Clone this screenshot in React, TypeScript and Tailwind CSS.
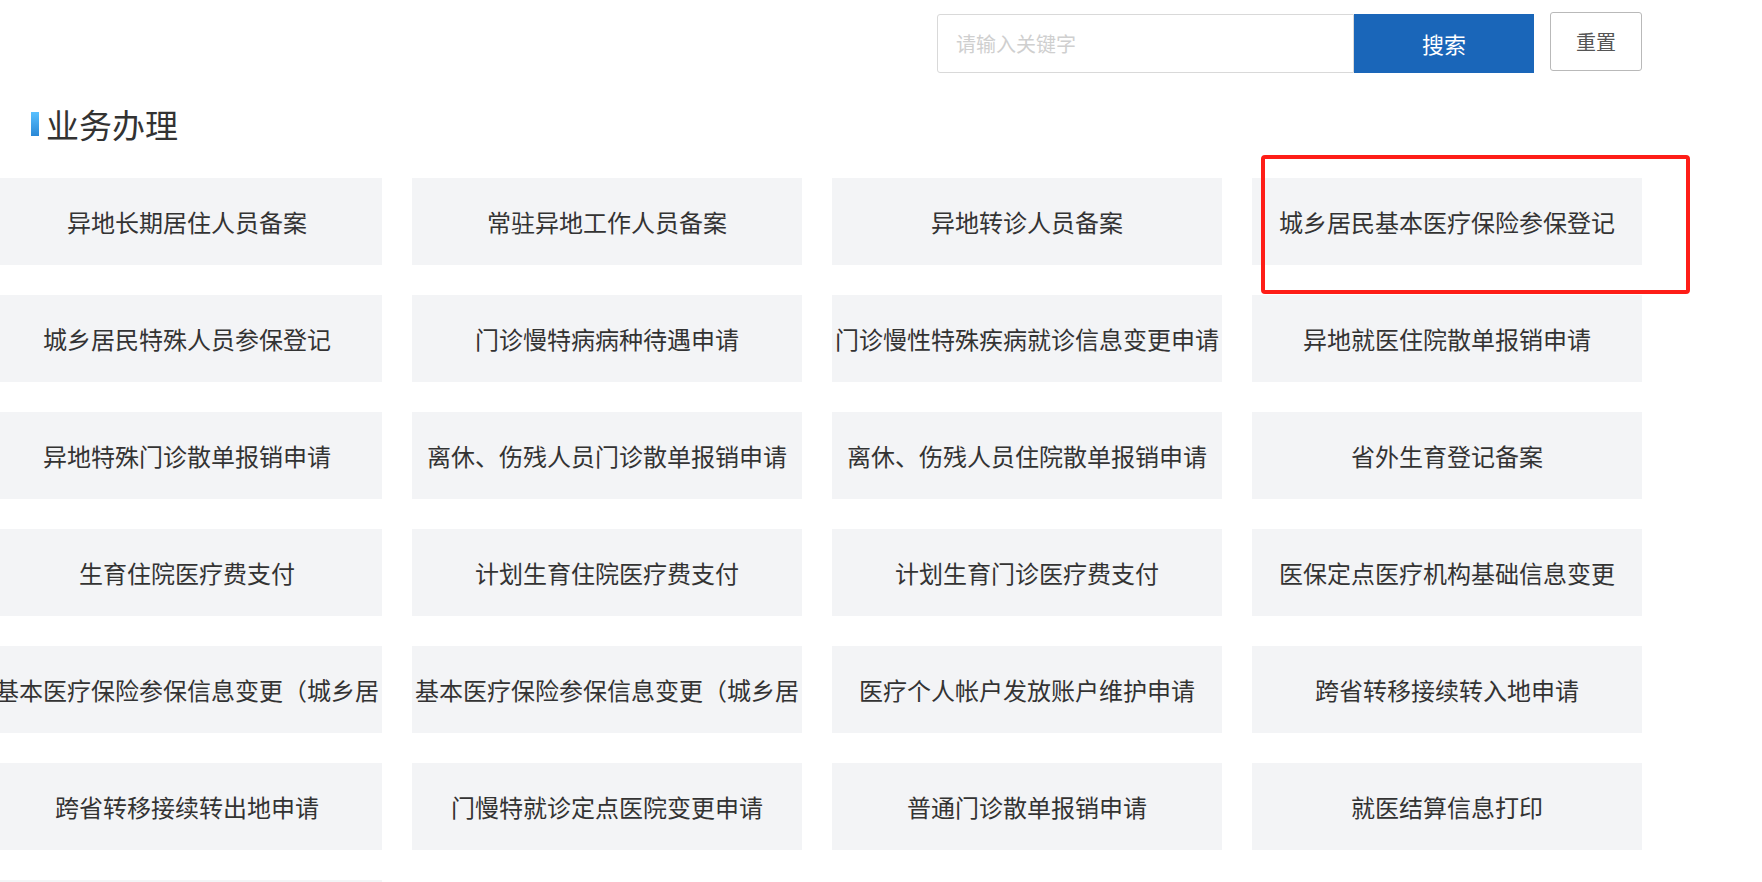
const font = { fontFamily: '"Noto Sans CJK SC", "Noto Sans", sans-serif' }

const services: string[] = [
  "异地长期居住人员备案",
  "常驻异地工作人员备案",
  "异地转诊人员备案",
  "城乡居民基本医疗保险参保登记",
  "城乡居民特殊人员参保登记",
  "门诊慢特病病种待遇申请",
  "门诊慢性特殊疾病就诊信息变更申请",
  "异地就医住院散单报销申请",
  "异地特殊门诊散单报销申请",
  "离休、伤残人员门诊散单报销申请",
  "离休、伤残人员住院散单报销申请",
  "省外生育登记备案",
  "生育住院医疗费支付",
  "计划生育住院医疗费支付",
  "计划生育门诊医疗费支付",
  "医保定点医疗机构基础信息变更",
  "基本医疗保险参保信息变更（城乡居民）",
  "基本医疗保险参保信息变更（城乡居民）",
  "医疗个人帐户发放账户维护申请",
  "跨省转移接续转入地申请",
  "跨省转移接续转出地申请",
  "门慢特就诊定点医院变更申请",
  "普通门诊散单报销申请",
  "就医结算信息打印",
  "",
]

function SearchBar() {
  return (
    <div className="flex items-start justify-end pt-[12px]">
      <div className="mt-[2px] flex h-[59px]">
        <input
          placeholder="请输入关键字"
          className="h-full w-[417px] rounded-l-[3px] border border-[#d9d9d9] px-[18px] text-[20px] text-[#333] outline-none placeholder:text-[#cfcfcf]"
          style={font}
        />
        <button className="h-full w-[180px] bg-[#1a66b9] text-[22px] text-white" style={font}>
          搜索
        </button>
      </div>
      <button
        className="ml-[16px] h-[59px] w-[92px] rounded-[3px] border border-[#b9b9b9] bg-white text-[20px] text-[#555]"
        style={font}
      >
        重置
      </button>
    </div>
  )
}

function ServiceCard({ label }: { label: string }) {
  // long labels wrap; the second line falls outside the box and is clipped
  return (
    <div
      className="h-[87px] overflow-hidden bg-[#f3f4f6] text-center text-[24px] leading-[87px] text-[#333]"
      style={font}
    >
      {label}
    </div>
  )
}

export default function App() {
  return (
    <div className="relative h-[882px] overflow-hidden bg-white">
      <div className="ml-[-8px] w-[1650px]">
        <SearchBar />

        <div className="mt-[35px] flex items-center pl-[39px]">
          <span className="h-[24px] w-[8px] bg-gradient-to-b from-[#58c0ff] to-[#2a88d6]" />
          <h2 className="ml-[7px] text-[33px] leading-[32px] text-[#333]" style={font}>
            业务办理
          </h2>
        </div>

        <div className="mt-[38px] grid grid-cols-4 gap-[30px]">
          {services.map((s, i) => (
            <ServiceCard key={i} label={s} />
          ))}
        </div>
      </div>

      {/* highlight annotation */}
      <div className="pointer-events-none absolute left-[1261px] top-[155px] h-[139px] w-[429px] rounded-[4px] border-[4px] border-[#fe1d17]" />
    </div>
  )
}
